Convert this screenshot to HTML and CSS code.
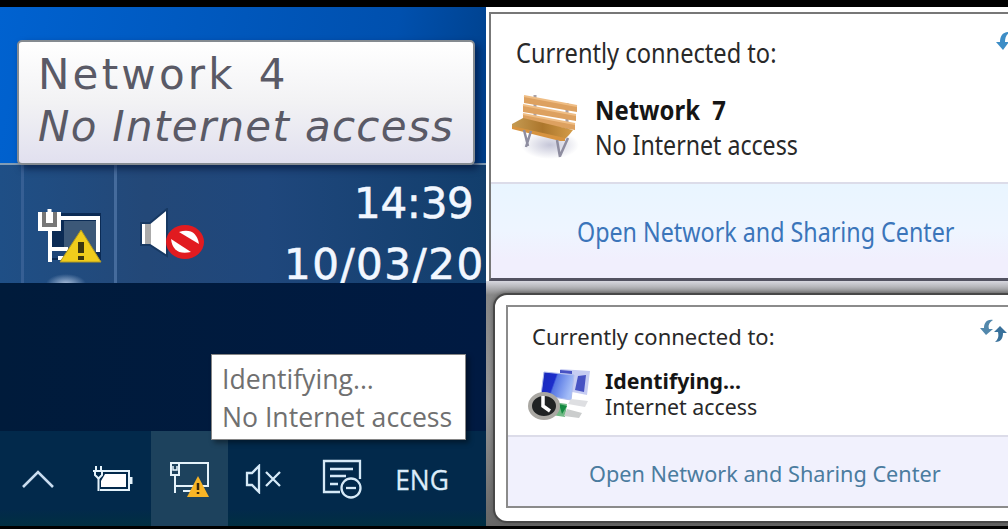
FILE: index.html
```html
<!DOCTYPE html>
<html lang="en">

<head>
    <meta charset="UTF-8">
    <meta name="viewport" content="width=device-width, initial-scale=1.0">
    <title>No Internet access</title>
    <link rel="stylesheet" href="styles.css">
</head>

<body>

    <div class="collage">

        <div class="column-left">

            <!-- Windows 7 desktop and taskbar -->
            <section class="seven">
                <div class="seven-tooltip">
                    <p class="tip-name">Network&nbsp; 4</p>
                    <p class="tip-status">No Internet access</p>
                </div>
                <div class="seven-bar">
                    <div class="seven-cell">
                        <svg width="68" height="58" viewBox="0 0 68 58">
                            <path d="M25 5H65V52H12V20H25Z" fill="#0b2b55" />
                            <path d="M28 13H60V44H28Z" fill="#3c5878" />
                            <path d="M12 26H16V40H35V50H12Z" fill="#1f4678" />
                            <path d="M24 10H62V44M14 23V54M14 41H32M22 50H34" fill="none" stroke="#fff" stroke-width="4" />
                            <path d="M2 4H25V23H2Z" fill="#fff" />
                            <path d="M8 4V17H19V4" fill="none" stroke="#777" stroke-width="4" />
                            <path d="M13.500 1V14" stroke="#fff" stroke-width="4" />
                            <path d="M45 22L65 54H24Z" fill="#f0cc1c" stroke="#b49b20" />
                            <path d="M45 34V45M45 48V52" stroke="#3b350f" stroke-width="6" />
                        </svg>
                    </div>
                    <svg class="seven-speaker" width="66" height="54" viewBox="0 0 66 54">
                        <path d="M1 15H10L27 1V48L10 37H1Z" fill="#fff" stroke="#173963" stroke-width="2" />
                        <path d="M5 16H11V36H5Z" fill="#aaa" />
                        <ellipse cx="45" cy="34" rx="19" ry="17" fill="#e11b20" />
                        <path d="M39 24Q56 19 59 36Z" fill="#fff" />
                        <path d="M31 31Q33 48 51 44Z" fill="#fff" />
                    </svg>
                    <div class="seven-clock">
                        <p class="time">14:39</p>
                        <p class="day">10/03/20</p>
                    </div>
                </div>
            </section>

            <!-- Windows 10 desktop and tray -->
            <section class="ten">
                <div class="ten-tooltip">
                    <p>Identifying...</p>
                    <p>No Internet access</p>
                </div>
                <div class="ten-bar">
                    <div class="tray">
                        <svg width="32" height="20" viewBox="0 0 32 20">
                            <path d="M1 18L16 3L31 18" fill="none" stroke="#c9dcef" stroke-width="2.600" />
                        </svg>
                    </div>
                    <div class="tray">
                        <svg width="40" height="28" viewBox="0 0 40 28">
                            <path d="M11 6H36V25H7" fill="none" stroke="#e5f3fb" stroke-width="2" />
                            <path d="M12 9H33V22H8V16Z" fill="#fff" />
                            <path d="M38 12V19" stroke="#e5f3fb" stroke-width="3" />
                            <path d="M3 1V6M8 1V6M0 6H11M5.500 13V26" stroke="#e5f3fb" stroke-width="2" />
                            <path d="M2 6H9V10L6 13H5L2 10Z" fill="#02294a" stroke="#e5f3fb" stroke-width="2" />
                        </svg>
                    </div>
                    <div class="tray active">
                        <svg width="40" height="36" viewBox="0 0 40 36">
                            <path d="M10 2H38V25H5M13 30H22" fill="none" stroke="#e5f3fb" stroke-width="2" />
                            <path d="M1 2H9V14H1ZM5 14V32" fill="none" stroke="#e5f3fb" stroke-width="2" />
                            <path d="M3 5V9H7V5" fill="none" stroke="#e5f3fb" stroke-width="1.500" />
                            <path d="M28 15L39 36H17Z" fill="#f8b526" />
                            <path d="M28 22V29M28 31V33" stroke="#39270c" stroke-width="2.500" />
                        </svg>
                    </div>
                    <div class="tray speaker">
                        <svg width="38" height="30" viewBox="0 0 38 30">
                            <path d="M2 9H7L14 2V28L7 21H2Z" fill="none" stroke="#d5e9f7" stroke-width="2.300" />
                            <path d="M21 8L35 22M35 8L21 22" stroke="#d5e9f7" stroke-width="2.300" />
                        </svg>
                    </div>
                    <div class="tray notes">
                        <svg width="40" height="40" viewBox="0 0 40 40">
                            <path d="M18 33H2V2H38V20" fill="none" stroke="#d5e9f7" stroke-width="2.300" />
                            <path d="M8 10H31M8 17H24M8 25H16" stroke="#d5e9f7" stroke-width="2.300" />
                            <circle cx="29" cy="29" r="9.500" fill="none" stroke="#d5e9f7" stroke-width="2.300" />
                            <path d="M24 29H34" stroke="#d5e9f7" stroke-width="2.300" />
                        </svg>
                    </div>
                    <span class="lang">ENG</span>
                </div>
            </section>
        </div>

        <div class="column-right">

            <!-- Network flyout, public network -->
            <section class="flyout flyout-network">
                <div class="flyout-body">
                    <header>
                        <h2>Currently connected to:</h2>
                        <svg class="refresh" width="27" height="25" viewBox="0 0 27 25">
                            <path d="M14 1C7 0 4 5 4 11H0L7 19L13 11H9C9 7 10 4 14 1Z" fill="#3d8dc6" />
                            <path d="M13 24C20 24 22 18 22 14H26L20 6L14 14H18C18 18 16 21 13 24Z" fill="#3478ab" />
                        </svg>
                    </header>
                    <div class="connection">
                        <svg width="70" height="70" viewBox="0 0 70 70">
                            <defs>
                                <radialGradient id="shade">
                                    <stop offset="0" stop-color="#c5c6d8" />
                                    <stop offset="1" stop-color="#fff" />
                                </radialGradient>
                                <linearGradient id="seat" x2="1">
                                    <stop offset="0" stop-color="#c59b52" />
                                    <stop offset=".5" stop-color="#ac762c" />
                                    <stop offset="1" stop-color="#d49c48" />
                                </linearGradient>
                            </defs>
                            <ellipse cx="40" cy="53" rx="29" ry="14" fill="url(#shade)" />
                            <path d="M25 3V34M57 11V42" stroke="#aaa1a5" stroke-width="3" />
                            <path d="M14 4L67 14V20L14 11ZM13 13L66 23V29L13 20ZM13 22L65 32V38L13 29Z" fill="#dda160" />
                            <path d="M14 4L67 14M13 13L66 23M13 22L65 32" stroke="#efbd84" stroke-width="2" />
                            <path d="M2 32L13 26L63 38L59 43L55 47L2 35Z" fill="url(#seat)" />
                            <path d="M2 34L55 46V49L50 49L2 37Z" fill="#d7933f" />
                            <path d="M14 38L18 54M21 39L16 55M47 48L50 65M58 46L50 64" stroke="#8e8da0" stroke-width="2.500" />
                        </svg>
                        <div>
                            <h3>Network&nbsp; 7</h3>
                            <p>No Internet access</p>
                        </div>
                    </div>
                </div>
                <footer><a href="#">Open Network and Sharing Center</a></footer>
            </section>

            <!-- Network flyout, still identifying -->
            <section class="flyout-frame">
                <div class="flyout flyout-identifying">
                    <div class="flyout-body">
                        <header>
                            <h2>Currently connected to:</h2>
                            <svg class="refresh" width="27" height="25" viewBox="0 0 27 25">
                                <path d="M13 1C6 0 4 5 4 9H0L6 16L13 10H9C8 6 9 4 13 1Z" fill="#5288ac" />
                                <path d="M15 23C22 23 23 18 23 14H27L20 7L14 13H18C19 18 18 20 15 23Z" fill="#39719b" />
                            </svg>
                        </header>
                        <div class="connection">
                            <svg width="64" height="54" viewBox="0 0 64 54">
                                <defs>
                                    <linearGradient id="screen" x2="1" y2=".3">
                                        <stop offset="0" stop-color="#1729b8" />
                                        <stop offset=".45" stop-color="#1c2dcb" />
                                        <stop offset=".5" stop-color="#5676e4" />
                                        <stop offset="1" stop-color="#a4bdf7" />
                                    </linearGradient>
                                </defs>
                                <path d="M32 1L62 3L59 27L44 24Z" fill="#c6ccf2" />
                                <path d="M32 2L44 3V6L32 5ZM50 8L58 7L56 24L47 22Z" fill="#4752c3" />
                                <path d="M16 4L46 7L43 32L13 27Z" fill="url(#screen)" stroke="#aebbed" />
                                <path d="M43 31L60 33L57 39L40 36Z" fill="#dedfe2" />
                                <path d="M25 34L39 36L37 49L24 47Z" fill="#71b985" />
                                <path d="M31 36L39 38L34 46Z" fill="#158b42" />
                                <path d="M39 41L54 45L51 50L36 48Z" fill="#cbcdcd" />
                                <ellipse cx="16" cy="38" rx="14" ry="12" fill="#202324" stroke="#aaa8a3" stroke-width="4" />
                                <path d="M15 28V38L22 43" fill="none" stroke="#fff" stroke-width="3.500" />
                            </svg>
                            <div>
                                <h3>Identifying...</h3>
                                <p>Internet access</p>
                            </div>
                        </div>
                    </div>
                    <footer><a href="#">Open Network and Sharing Center</a></footer>
                </div>
            </section>
        </div>

    </div>

</body>

</html>
```
FILE: styles.css
```css
* {
    margin: 0;
    padding: 0;
    box-sizing: border-box;
}

body {
    background-color: #000;
    font-family: "Noto Sans", "Open Sans", sans-serif;
    overflow: hidden;
}

svg {
    display: block;
    flex-shrink: 0;
}

p,
h2,
h3,
a,
.lang {
    white-space: nowrap;
    transform-origin: left center;
}

.collage {
    display: flex;
    width: 1008px;
    height: 529px;
    padding: 7px 0 3px;
    overflow: hidden;
}

.column-left {
    width: 486px;
    flex-shrink: 0;
}

.column-right {
    width: 522px;
    flex-shrink: 0;
    overflow: hidden;
    background-color: #fff;
}

/* Windows 7 taskbar */
.seven {
    position: relative;
    height: 276px;
    padding-top: 156px;
    background: linear-gradient(100deg, #0062d0, #0050ae 75%, #003d83);
    overflow: hidden;
}

.seven-tooltip {
    position: absolute;
    left: 17px;
    top: 33px;
    width: 458px;
    height: 125px;
    padding: 7px 0 0 19px;
    border: 2px solid #858b91;
    border-radius: 5px;
    background: linear-gradient(#fff, #f2f2f4 50%, #e1e0ef);
    box-shadow: 4px 4px 7px rgba(0, 15, 50, 0.6);
    font-family: "DejaVu Sans", sans-serif;
    font-size: 42px;
    line-height: 52px;
    color: #5a5a66;
}

.tip-name {
    letter-spacing: 3.2px;
    word-spacing: -5px;
}

.tip-status {
    font-style: italic;
    letter-spacing: 1.3px;
}

.seven-bar {
    display: flex;
    height: 120px;
    padding-left: 21px;
    border-top: 2px solid #819cb5;
    background: linear-gradient(90deg, #1f4f86, #234878 30%, #1f477c 55%, #123e6c);
}

.seven-cell {
    width: 96px;
    flex-shrink: 0;
    padding: 43px 0 0 12px;
    border-left: 3px solid #365f94;
    border-right: 3px solid #456b9c;
    background: radial-gradient(20px 10px at 42px 119px, #a9bfdc, transparent);
}

.seven-speaker {
    margin: 43px 0 0 23px;
}

.seven-clock {
    width: 279px;
    flex-shrink: 0;
    padding: 8px 0 0 78px;
    font-family: "DejaVu Sans", sans-serif;
    font-size: 42px;
    line-height: 61px;
    color: #f2f7ff;
    -webkit-text-stroke: 0.6px #f2f7ff;
}

.time {
    padding-left: 70px;
    letter-spacing: -0.3px;
}

.day {
    margin-top: 12px;
    line-height: 37px;
    letter-spacing: 1.5px;
}

/* Windows 10 taskbar */
.ten {
    position: relative;
    height: 243px;
    padding-top: 148px;
    background: linear-gradient(90deg, #001b3b, #001a42);
}

.ten-tooltip {
    position: absolute;
    left: 211px;
    top: 71px;
    width: 255px;
    height: 86px;
    padding: 4px 0 0 10px;
    border: 1px solid #858585;
    background-color: #fff;
    box-shadow: 3px 3px 5px rgba(0, 0, 0, 0.4);
    font-family: "Open Sans", sans-serif;
    font-size: 28px;
    line-height: 38px;
    color: #707070;
}

.ten-tooltip p {
    color: #707070;
    transform: scaleX(0.95);
}

.ten-bar {
    display: flex;
    height: 95px;
    background: linear-gradient(#02294b 82%, #002f42);
}

.tray {
    display: flex;
    align-items: center;
    justify-content: center;
    width: 75.5px;
}

.active {
    width: 77px;
    background-color: #1d425d;
}

.speaker {
    width: 72px;
}

.notes {
    width: 83px;
}

.lang {
    padding-left: 13px;
    font-family: "Open Sans", sans-serif;
    font-size: 28px;
    line-height: 97px;
    color: #dcecfa;
    -webkit-text-stroke: 0.3px #dcecfa;
    transform: scaleX(0.94);
}

/* Flyouts */
.flyout header {
    display: flex;
    justify-content: space-between;
}

.flyout h2 {
    font-size: inherit;
    font-weight: normal;
    color: #292929;
}

.flyout h3 {
    font-size: inherit;
    color: #151515;
}

.flyout p {
    color: #292929;
}

.flyout footer {
    border-top: 2px solid #dcdce9;
    background-color: #f1f1fd;
}

.flyout a {
    display: block;
    text-decoration: none;
    color: #3b75ba;
}

.connection {
    display: flex;
}

.flyout-network {
    width: 540px;
    height: 269px;
    margin: 5px 0 0 3px;
    border: 2px solid #777;
    border-bottom: 3px solid #535261;
    font-size: 27px;
}

.flyout-network .flyout-body {
    height: 168px;
    padding: 19px 4px 0 25px;
}

.flyout-network header {
    height: 59px;
    line-height: 40px;
}

.flyout-network h2 {
    transform: scaleX(0.875);
}

.flyout-network .refresh {
    margin-top: -2px;
}

.flyout-network .connection {
    gap: 15px;
    margin-left: -6px;
    line-height: 35px;
}

.flyout-network h3 {
    transform: scaleX(0.885);
}

.flyout-network .connection p {
    transform: scaleX(0.857);
}

.flyout-network footer {
    height: 96px;
    padding: 1px 0 0 86px;
    line-height: 93px;
    background: linear-gradient(#e9f5ff, #eef5ff 50%, #f1effd 80%);
}

.flyout-network a {
    transform: scaleX(0.862);
}

.flyout-frame {
    position: relative;
    height: 245px;
    padding: 14px 0 0 7px;
    background: linear-gradient(#d7d7df, #888 14px, #999 50%, #666);
}

.flyout-frame::before {
    content: "";
    position: absolute;
    left: 7px;
    top: 12px;
    width: 540px;
    height: 226px;
    border: 2px solid #484848;
    border-radius: 14px;
    background-color: #fff;
    box-shadow: 0 0 5px #555;
}

.flyout-identifying {
    position: relative;
    width: 530px;
    height: 203px;
    margin: 10px 0 0 13px;
    border: 2px solid #8b8b8b;
    font-size: 22px;
}

.flyout-identifying .flyout-body {
    height: 128px;
    padding: 14px 19px 0 24px;
}

.flyout-identifying header {
    height: 47px;
    line-height: 30px;
}

.flyout-identifying .refresh {
    margin: -2px 8px 0 0;
}

.flyout-identifying .connection {
    gap: 13px;
    margin-left: -4px;
    font-size: 21.300px;
    line-height: 26px;
}

.flyout-identifying footer {
    height: 71px;
    padding: 2px 0 0 81px;
    line-height: 70px;
}

.flyout-identifying a {
    font-size: 21.700px;
    color: #4b7c9f;
}
```
